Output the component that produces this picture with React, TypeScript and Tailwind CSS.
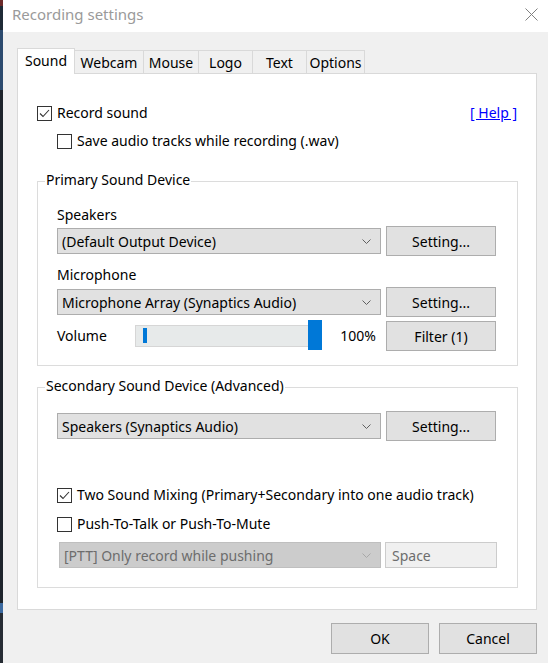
import React from "react";

function Check({ checked }: { checked?: boolean }) {
  return (
    <span className="flex h-[15px] w-[15px] shrink-0 items-center justify-center border border-[#333333] bg-white">
      {checked && (
        <svg width="11" height="9" viewBox="0 0 11 9">
          <path d="M1 4.5 L4 7.5 L10 1" fill="none" stroke="#333333" strokeWidth="1.1" />
        </svg>
      )}
    </span>
  );
}

function Combo({ text, disabled }: { text: string; disabled?: boolean }) {
  return (
    <div
      className={
        disabled
          ? "flex h-[26px] w-[322px] items-center border border-[#bfbfbf] bg-[#cccccc] pl-[4px] pr-[9px] text-[#6d6d6d]"
          : "flex h-[26px] w-[324px] items-center border border-[#adadad] bg-[#e1e1e1] pl-[4px] pr-[9px] text-black"
      }
    >
      <span className="flex-1 truncate">{text}</span>
      <svg width="9" height="5" viewBox="0 0 9 5">
        <path d="M0.5 0.5 L4.5 4.5 L8.5 0.5" fill="none" stroke={disabled ? "#a8a8a8" : "#606060"} strokeWidth="1" />
      </svg>
    </div>
  );
}

function Btn({ children, w = "w-[110px]" }: { children: React.ReactNode; w?: string }) {
  return (
    <div className={`flex h-[30px] ${w} shrink-0 items-center justify-center border border-[#adadad] bg-[#e1e1e1] text-black`}>
      {children}
    </div>
  );
}

export default function App() {
  const tabs = [
    { t: "Webcam", w: "w-[69px]" },
    { t: "Mouse", w: "w-[55px]" },
    { t: "Logo", w: "w-[54px]" },
    { t: "Text", w: "w-[54px]" },
    { t: "Options", w: "w-[58px]" },
  ];
  return (
    <div className="flex h-[663px] w-[548px] bg-[#f0f0f0] font-['Noto_Sans',sans-serif] text-[14px] text-black">
      <div className="flex w-[3px] shrink-0 flex-col bg-[#1d232b]">
        <div className="h-[6px] bg-[#6b2a2a]" />
        <div className="h-[24px] bg-[#1f2a36]" />
        <div className="h-[60px] bg-[#2c4a6e]" />
        <div className="flex-1 bg-[#1e242c]" />
        <div className="h-[10px] bg-[#3c6aa0]" />
        <div className="h-[50px] bg-[#262c34]" />
      </div>
      <div className="flex flex-1 flex-col">
        <div className="flex h-[32px] items-center justify-between bg-white pb-[3px] pl-[9px] pr-[10px]">
          <span className="text-[15px] text-[#9a9a9a]">Recording settings</span>
          <svg width="13" height="13" viewBox="0 0 13 13">
            <path d="M0.5 0.5 L12.5 12.5 M12.5 0.5 L0.5 12.5" stroke="#808080" strokeWidth="1" />
          </svg>
        </div>

        <div className="ml-[14px] mt-[16px] flex items-end">
          <div className="relative z-10 -mb-px flex h-[26px] w-[58px] items-center justify-center border-l border-r border-t border-[#d9d9d9] bg-white pb-[2px]">
            Sound
          </div>
          {tabs.map((x) => (
            <div
              key={x.t}
              className={`flex h-[23px] ${x.w} items-center justify-center border-r border-t border-[#d9d9d9] bg-[#f0f0f0]`}
            >
              {x.t}
            </div>
          ))}
        </div>

        <div className="ml-[14px] flex h-[537px] w-[520px] flex-col border border-[#d9d9d9] bg-white pl-[19px] pr-[18px] pt-[29px] pb-[20px]">
          <div className="flex h-[20px] items-center">
            <Check checked />
            <span className="ml-[5px] pb-px">Record sound</span>
            <span className="ml-auto mr-[1px] pb-px text-[#0000ff] underline">[&nbsp;Help&nbsp;]</span>
          </div>
          <div className="ml-[20px] mt-[8px] flex h-[20px] items-center">
            <Check />
            <span className="ml-[5px] pb-px">Save audio tracks while recording (.wav)</span>
          </div>

          <div className="relative mt-[30px] flex w-[481px] flex-col border border-[#dcdcdc] pb-[14px] pl-[19px] pt-[23px]">
            <span className="absolute -top-[12px] left-[7px] bg-white px-[1px] leading-[20px]">Primary Sound Device</span>
            <div className="h-[20px] leading-[19px]">Speakers</div>
            <div className="mt-[1px] flex h-[30px] w-[439px] items-center gap-[5px]">
              <Combo text="(Default Output Device)" />
              <Btn>Setting...</Btn>
            </div>
            <div className="mt-[9px] h-[20px] leading-[19px]">Microphone</div>
            <div className="mt-[2px] flex h-[30px] w-[439px] items-center gap-[5px]">
              <Combo text="Microphone Array (Synaptics Audio)" />
              <Btn>Setting...</Btn>
            </div>
            <div className="mt-[4px] flex h-[30px] w-[439px] items-center">
              <span className="w-[78px] pb-px">Volume</span>
              <div className="relative h-[22px] w-[187px] border border-[#d6d6d6] bg-[#e7eaea]">
                <div className="absolute left-[7px] top-[2px] h-[15px] w-[4px] bg-[#0078d7]" />
                <div className="absolute -right-px -top-[6px] h-[30px] w-[14px] bg-[#0078d7]" />
              </div>
              <span className="ml-auto mr-[10px] pb-px">100%</span>
              <Btn>Filter (1)</Btn>
            </div>
          </div>

          <div className="relative mt-[21px] flex w-[481px] flex-col border border-[#dcdcdc] pb-[19px] pl-[19px] pt-[23px]">
            <span className="absolute -top-[12px] left-[7px] bg-white px-[1px] leading-[20px]">Secondary Sound Device (Advanced)</span>
            <div className="flex h-[30px] w-[439px] items-center gap-[5px]">
              <Combo text="Speakers (Synaptics Audio)" />
              <Btn>Setting...</Btn>
            </div>
            <div className="mt-[44px] flex h-[20px] items-center">
              <Check checked />
              <span className="ml-[5px] pb-px">Two Sound Mixing (Primary+Secondary into one audio track)</span>
            </div>
            <div className="mt-[9px] flex h-[20px] items-center">
              <Check />
              <span className="ml-[5px] pb-px">Push-To-Talk or Push-To-Mute</span>
            </div>
            <div className="ml-[2px] mt-[8px] flex h-[26px] items-center gap-[4px]">
              <Combo text="[PTT] Only record while pushing" disabled />
              <div className="flex h-[26px] w-[112px] items-center border border-[#cccccc] bg-[#f0f0f0] pl-[6px] text-[#6d6d6d]">
                Space
              </div>
            </div>
          </div>
        </div>

        <div className="mr-[11px] mt-[13px] flex justify-end gap-[10px]">
          <Btn w="w-[98px] h-[31px]">OK</Btn>
          <Btn w="w-[98px] h-[31px]">Cancel</Btn>
        </div>
      </div>
    </div>
  );
}
